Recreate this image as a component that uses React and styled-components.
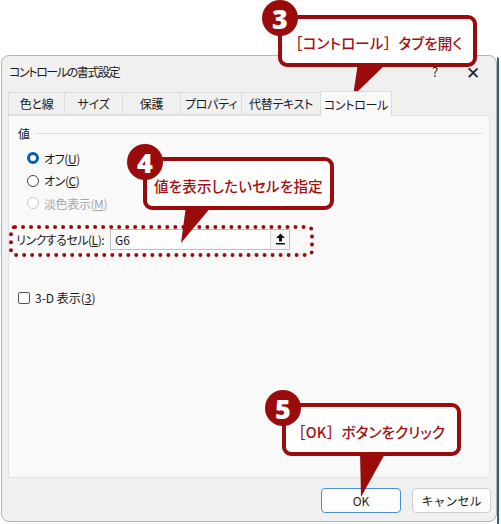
import React from 'react';
import styled, { createGlobalStyle } from 'styled-components';

const RED = '#9a0b0b';
const FONT = `"Noto Sans CJK JP", "Noto Sans", sans-serif`;

const Global = createGlobalStyle`
  html, body {
    margin: 0;
    padding: 0;
    background: #fff;
  }
  body {
    font-family: ${FONT};
    font-feature-settings: "palt";
    color: #1a1a1a;
  }
`;

const Page = styled.div`
  position: relative;
  width: 501px;
  height: 524px;
  overflow: hidden;
  display: flex;
  box-sizing: border-box;
  padding: 55px 0 0 1px;
  background: #fff;
`;

const Dialog = styled.div`
  width: 496px;
  height: 467px;
  box-sizing: border-box;
  background: #f0f0f0;
  border: 1px solid #b4b4b4;
  border-radius: 8px;
  display: flex;
  flex-direction: column;
`;

const Desk = styled.div`
  width: 2px;
  margin-top: 2px;
  background: #2c6375;
  border-top-right-radius: 6px;
`;

const TitleBar = styled.div`
  height: 30px;
  display: flex;
  align-items: center;
  padding-left: 7px;
  font-size: 12px;
`;

const Title = styled.div`
  flex: 1;
  letter-spacing: -1.4px;
`;

const TitleBtn = styled.span`
  width: ${p => p.$w}px;
  text-align: center;
  font-size: ${p => p.$size}px;
  color: #222;
`;

const TabStrip = styled.div`
  display: flex;
  align-items: flex-end;
  height: 29px;
  padding-left: 7px;
`;

const Tab = styled.div`
  width: ${p => p.$w}px;
  height: ${p => (p.$active ? 25 : 23)}px;
  box-sizing: border-box;
  display: flex;
  align-items: center;
  justify-content: center;
  font-size: 12px;
  letter-spacing: -0.3px;
  background: ${p => (p.$active ? '#f9f9f9' : '#f0f0f0')};
  border: 1px solid #dcdcdc;
  border-bottom: ${p => (p.$active ? 'none' : '1px solid #dcdcdc')};
  margin-left: -1px;
  margin-bottom: ${p => (p.$active ? -1 : 0)}px;
  position: relative;
  z-index: ${p => (p.$active ? 1 : 0)};
`;

const Panel = styled.div`
  margin: 0 6px;
  height: 363px;
  box-sizing: border-box;
  background: #f9f9f9;
  border: 1px solid #e2e2e2;
  display: flex;
  flex-direction: column;
`;

const GroupHead = styled.div`
  margin: 9px 6px 0 9px;
  height: 16px;
  display: flex;
  align-items: center;
  gap: 5px;
  font-size: 12px;
  &::after {
    content: '';
    flex: 1;
    height: 1px;
    background: #dedede;
  }
`;

const RadioList = styled.div`
  margin-top: 6px;
  padding-left: 18px;
  display: flex;
  flex-direction: column;
`;

const OptionRow = styled.label`
  height: 22.5px;
  display: flex;
  align-items: center;
  gap: 5px;
  font-size: 12px;
  letter-spacing: -0.4px;
  color: ${p => (p.$disabled ? '#a6a6a6' : '#1a1a1a')};
`;

const Radio = styled.span`
  width: 12px;
  height: 12px;
  box-sizing: border-box;
  border-radius: 50%;
  background: #fff;
  border: ${p =>
    p.$checked ? '3.5px solid #005fb8' : p.$disabled ? '1px solid #c9c9c9' : '1px solid #444'};
`;

const Check = styled.span`
  width: 12px;
  height: 12px;
  box-sizing: border-box;
  border: 1px solid #555;
  border-radius: 2px;
  background: #fdfdfd;
`;

const LinkRow = styled.div`
  margin-top: 14px;
  padding-left: 7px;
  height: 21px;
  display: flex;
  align-items: center;
  font-size: 12px;
`;

const LinkLabel = styled.span`
  width: 94px;
  letter-spacing: -0.5px;
`;

const Field = styled.div`
  width: 180px;
  height: 21px;
  box-sizing: border-box;
  border: 1px solid #bdbdbd;
  background: #fff;
  display: flex;
  align-items: center;
  font-size: 12px;
  padding-left: 4px;
`;

const FieldText = styled.span`
  flex: 1;
`;

const FieldBtn = styled.span`
  width: 19px;
  height: 19px;
  box-sizing: border-box;
  border-left: 1px solid #d6d6d6;
  background: #f7f7f7;
  display: flex;
  align-items: center;
  justify-content: center;
`;

const CheckRow = styled(OptionRow)`
  margin-top: 41px;
  padding-left: 9px;
  height: 14px;
  letter-spacing: 0;
`;

const Footer = styled.div`
  flex: 1;
  display: flex;
  justify-content: flex-end;
  align-items: flex-start;
  gap: 11px;
  padding: 10px 5px 0 0;
`;

const Button = styled.button`
  width: ${p => p.$w}px;
  height: 25px;
  box-sizing: border-box;
  border-radius: 4px;
  border: 1px solid ${p => (p.$primary ? '#4a8fd4' : '#cfcfcf')};
  background: #fdfdfd;
  font-family: ${FONT};
  font-size: 12px;
  font-weight: 400;
  color: #1a1a1a;
  padding: 0;
`;

const Mark = styled.div`
  position: absolute;
  left: 9px;
  top: 225px;
  width: 305px;
  height: 32px;
  box-sizing: border-box;
  border: 4px dotted ${RED};
  border-radius: 6px;
`;

const Bubble = styled.div`
  position: absolute;
  left: ${p => p.$x}px;
  top: ${p => p.$y}px;
  width: ${p => p.$w}px;
  height: ${p => p.$h}px;
  box-sizing: border-box;
  background: #fff;
  border: 4px solid ${RED};
  border-radius: 9px;
  display: flex;
  align-items: center;
  padding: 3px 0 0 ${p => p.$pad}px;
  font-size: 14.5px;
  font-weight: 500;
  color: #a3100f;
  letter-spacing: 0.2px;
  white-space: nowrap;
`;

const Bracket = styled.span`
  font-feature-settings: normal;
`;

const Badge = styled.div`
  position: absolute;
  left: ${p => p.$cx - 18}px;
  top: ${p => p.$cy - 18}px;
  width: 36px;
  height: 36px;
  border-radius: 50%;
  background: ${RED};
  color: #fff;
  display: flex;
  align-items: center;
  justify-content: center;
  font-family: "Noto Sans", sans-serif;
  font-weight: 900;
  font-size: 27px;
  line-height: 1;
`;

const Tails = styled.svg`
  position: absolute;
  left: 0;
  top: 0;
  pointer-events: none;
`;

const tabs = [
  ['色と線', 57],
  ['サイズ', 59],
  ['保護', 59],
  ['プロパティ', 62],
  ['代替テキスト', 80],
  ['コントロール', 72, true],
];

const callouts = [
  {
    n: 3, x: 278, y: 15, w: 199, h: 52, pad: 6, cx: 280, cy: 18,
    text: <><Bracket>［</Bracket>コントロール<Bracket>］</Bracket>タブを開く</>,
    tail: '358,63 387,63 353,96',
  },
  {
    n: 4, x: 143, y: 157, w: 191, h: 53, pad: 7, cx: 145, cy: 162,
    text: '値を表示したいセルを指定',
    tail: '186,206 212,206 181,243',
  },
  {
    n: 5, x: 282, y: 403, w: 179, h: 53, pad: 5, cx: 283, cy: 408,
    text: <><Bracket>［</Bracket>OK<Bracket>］</Bracket>ボタンをクリック</>,
    tail: '360,452 386,452 361,497',
  },
];

const UploadIcon = () => (
  <svg width="11" height="12" viewBox="0 0 11 12">
    <path d="M5.5 0.5 L10 5 H7 V8.5 H4 V5 H1 Z" fill="#111" />
    <rect x="1" y="10" width="9" height="1.5" fill="#111" />
  </svg>
);

export default function App() {
  return (
    <>
      <Global />
      <Page>
        <Dialog>
          <TitleBar>
            <Title>コントロールの書式設定</Title>
            <TitleBtn $w={30} $size={13}>?</TitleBtn>
            <TitleBtn $w={46} $size={17}>✕</TitleBtn>
          </TitleBar>
          <TabStrip>
            {tabs.map(([label, w, active]) => (
              <Tab key={label} $w={w} $active={active}>{label}</Tab>
            ))}
          </TabStrip>
          <Panel>
            <GroupHead>値</GroupHead>
            <RadioList>
              <OptionRow>
                <Radio $checked />
                <span>オフ(<u>U</u>)</span>
              </OptionRow>
              <OptionRow>
                <Radio />
                <span>オン(<u>C</u>)</span>
              </OptionRow>
              <OptionRow $disabled>
                <Radio $disabled />
                <span>淡色表示(<u>M</u>)</span>
              </OptionRow>
            </RadioList>
            <LinkRow>
              <LinkLabel>リンクするセル(<u>L</u>):</LinkLabel>
              <Field>
                <FieldText>G6</FieldText>
                <FieldBtn><UploadIcon /></FieldBtn>
              </Field>
            </LinkRow>
            <CheckRow as="label">
              <Check />
              <span>3-D 表示(<u>3</u>)</span>
            </CheckRow>
          </Panel>
          <Footer>
            <Button $w={80} $primary>OK</Button>
            <Button $w={79}>キャンセル</Button>
          </Footer>
        </Dialog>
        <Desk />

        <Mark />
        {callouts.map(c => (
          <Bubble key={c.n} $x={c.x} $y={c.y} $w={c.w} $h={c.h} $pad={c.pad}>{c.text}</Bubble>
        ))}
        <Tails width="501" height="524">
          {callouts.map(c => (
            <polygon key={c.n} points={c.tail} fill={RED} />
          ))}
        </Tails>
        {callouts.map(c => (
          <Badge key={c.n} $cx={c.cx} $cy={c.cy}>{c.n}</Badge>
        ))}
      </Page>
    </>
  );
}
